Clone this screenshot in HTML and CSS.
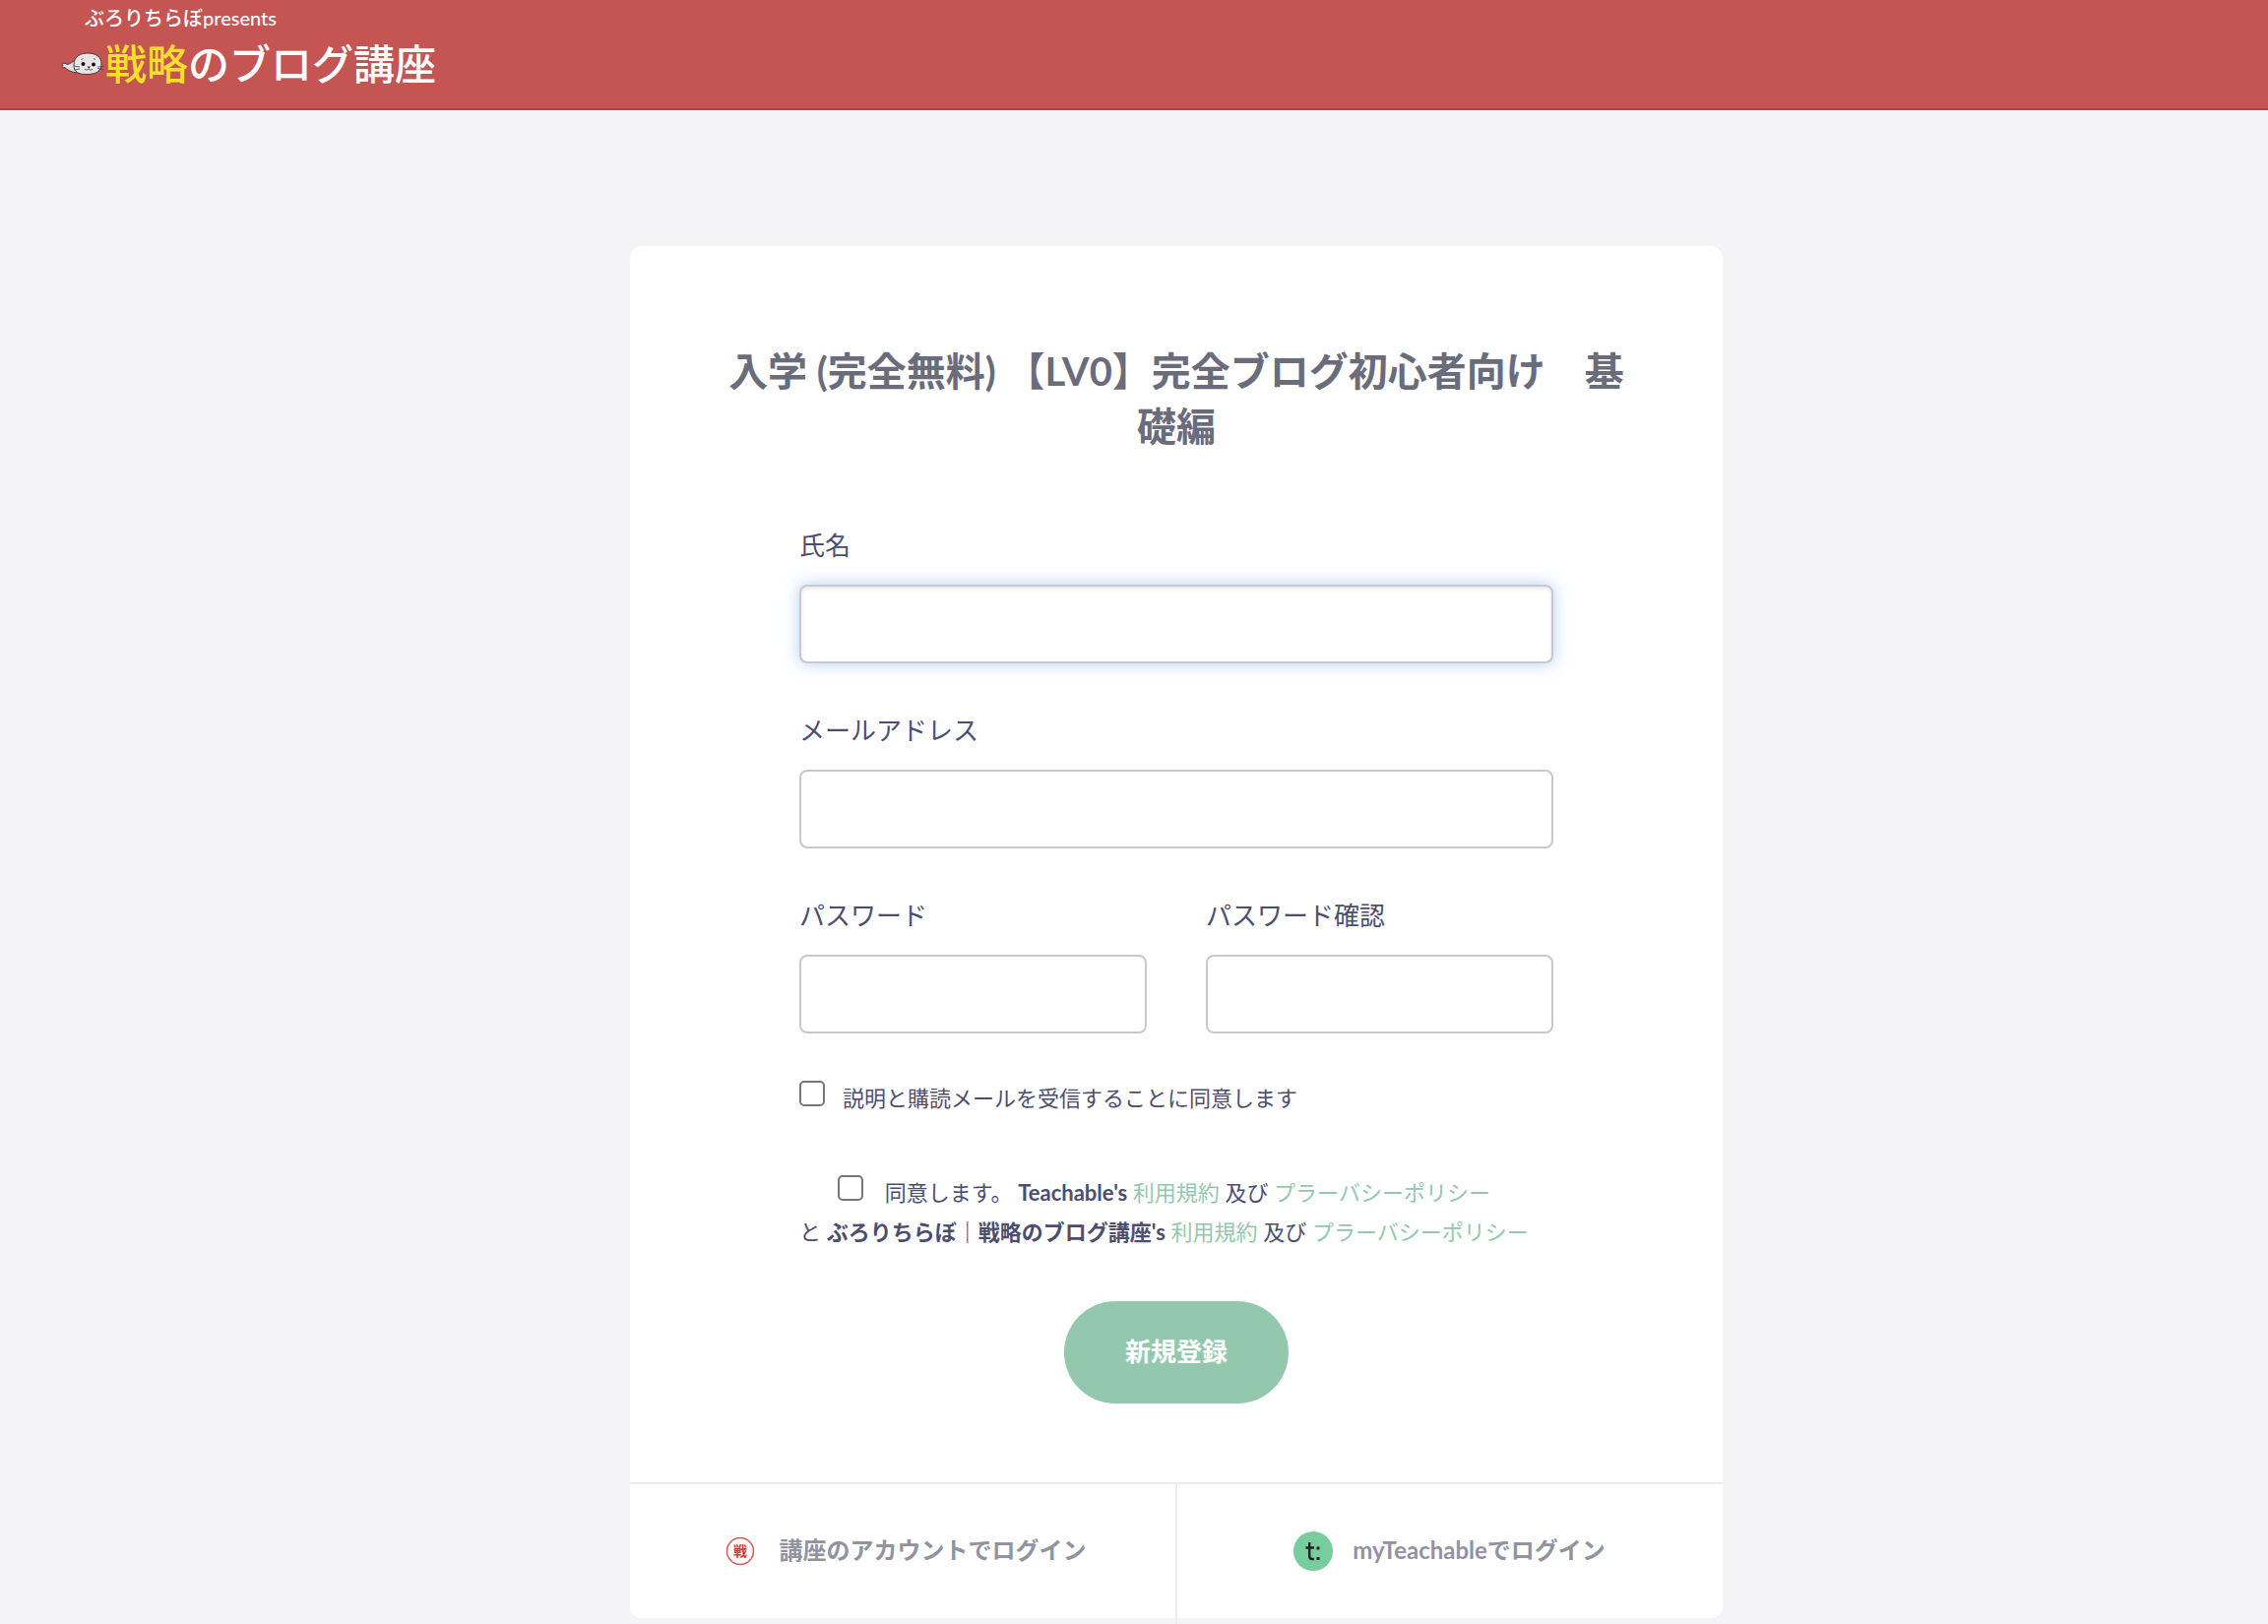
FILE: index.html
```html
<!DOCTYPE html>
<html lang="ja">
<head>
<meta charset="utf-8">
<meta name="viewport" content="width=device-width, initial-scale=1">
<title>戦略のブログ講座</title>
<link rel="stylesheet" href="styles.css">
</head>
<body>
<header class="site-header">
  <a class="logo" href="#">
    <span class="logo-sub">ぶろりちらぼpresents</span>
    <span class="logo-main">
      <svg class="seal" viewBox="0 0 44 24" aria-hidden="true">
        <path d="M16 21C10 20 6 18 4 15.500C1 16 0 14.500 2 13.500L1 12C3 10.500 5 11.500 6 12.500C9 12 12 10 15 7Z" fill="#e4e0e2" stroke="#4a3a3c" stroke-width="1"/>
        <path d="M13 13C13 4 20 1 27 1C36 1 41 5 41 12C41 19 36 22.500 26 22.500C17 22.500 13 20 13 13Z" fill="#e9e4e6" stroke="#4a3a3c" stroke-width="1"/>
        <circle cx="22.500" cy="12" r="2" fill="#111"/>
        <circle cx="33" cy="12.500" r="2" fill="#111"/>
        <path d="M26.500 14.500h3.500l-1.700 2z" fill="#222"/>
        <path d="M20.500 7.500l2-1M33 6.500l2 1M28 16.500c-.5 2-3 2-4 .5M28 16.500c.5 2 3 2 4 .5M13 14l6 1M13 18l6-1M37 15l6-.5M37 16.500l6 1" fill="none" stroke="#444" stroke-width=".8"/>
      </svg>
      <span class="logo-text"><span class="logo-accent">戦略</span>のブログ講座</span>
    </span>
  </a>
</header>

<main class="page">
  <section class="card">
    <form class="signup">
      <h1 class="title">入学 (完全無料) 【LV0】完全ブログ初心者向け　基礎編</h1>
      <div class="fields">
        <div class="field">
          <label for="name">氏名</label>
          <input class="input is-active" id="name" type="text">
        </div>
        <div class="field">
          <label for="email">メールアドレス</label>
          <input class="input" id="email" type="email">
        </div>
        <div class="field-row">
          <div class="field">
            <label for="password">パスワード</label>
            <input class="input" id="password" type="password">
          </div>
          <div class="field">
            <label for="confirm">パスワード確認</label>
            <input class="input" id="confirm" type="password">
          </div>
        </div>
        <div class="mail-consent">
          <input class="check" id="mail" type="checkbox">
          <label for="mail">説明と購読メールを受信することに同意します</label>
        </div>
        <div class="terms">
          <input class="check" id="terms" type="checkbox"><label for="terms">同意します。</label> <strong>Teachable's</strong> <a href="#">利用規約</a> 及び <a href="#">プラーバシーポリシー</a><br>
          と <strong>ぶろりちらぼ｜戦略のブログ講座's</strong> <a href="#">利用規約</a> 及び <a href="#">プラーバシーポリシー</a>
        </div>
        <button class="submit" type="submit">新規登録</button>
      </div>
    </form>
    <nav class="logins">
      <a class="login" href="#">
        <svg class="login-icon" viewBox="0 0 40 40" aria-hidden="true">
          <circle cx="20" cy="20" r="13.500" fill="#fff" stroke="#d9595b" stroke-width="1.500"/>
          <text class="stamp" x="20" y="25" text-anchor="middle">戦</text>
        </svg>
        <span class="login-text">講座のアカウントでログイン</span>
      </a>
      <a class="login" href="#">
        <svg class="login-icon" viewBox="0 0 40 40" aria-hidden="true">
          <circle cx="20" cy="20" r="20" fill="#78cd9e"/>
          <path d="M16.200 11v14q0 3 3 3h1.800M12.500 16.500h8.500" fill="none" stroke="#222" stroke-width="2.400"/>
          <path d="M23.500 15.500h3v3h-3zM23.500 26h3v3h-3z" fill="#222"/>
        </svg>
        <span class="login-text">myTeachableでログイン</span>
      </a>
    </nav>
  </section>
</main>
</body>
</html>
```

FILE: styles.css
```css
*,
*::before {
  box-sizing: border-box;
}

body {
  margin: 0;
  background: #f4f4f7;
  color: #4d4e6f;
  font-family: Lato, "Noto Sans CJK JP", sans-serif;
  font-size: 22px;
}

a {
  color: #94c8ae;
  text-decoration: none;
}

.site-header {
  padding: 2px 62px 14px;
  border-bottom: 2px solid #bd3d3d;
  background: #c45553;
}

.logo {
  display: inline-flex;
  flex-direction: column;
  color: #fff;
}

.logo-sub {
  padding-left: 24px;
  font-size: 20px;
  font-weight: 500;
  line-height: 32px;
}

.logo-main {
  display: flex;
  align-items: center;
  gap: 1px;
  font-size: 42px;
  font-weight: 500;
  line-height: 62px;
}

.logo-accent {
  color: #f7de2e;
}

.seal {
  width: 44px;
  height: 24px;
}

.page {
  padding: 138px 0 6px 86px;
}

.card {
  width: 100%;
  max-width: 1110px;
  margin: 0 auto;
  border-radius: 12px;
  background: #fff;
}

.signup {
  padding: 99px 80px 80px;
}

.title {
  margin: 0 0 75px;
  padding: 0 12px;
  color: #6b6c7b;
  font-size: 40px;
  font-weight: 700;
  line-height: 56px;
  text-align: center;
}

.fields {
  display: flex;
  flex-direction: column;
  gap: 50px;
  padding: 0 92px;
}

.field {
  display: flex;
  flex: 1;
  flex-direction: column;
  gap: 22px;
  min-width: 0;
}

.field label {
  font-size: 26px;
  line-height: 36px;
}

.field-row {
  display: flex;
  gap: 60px;
}

.input {
  width: 100%;
  height: 80px;
  padding: 0 24px;
  border: 2px solid #c9c8ce;
  border-radius: 8px;
  outline: 0;
  background: #fff;
  color: inherit;
  font: inherit;
}

.input:focus,
.input.is-active {
  box-shadow: inset 0 2px 4px rgba(0, 0, 0, 0.1), 0 0 16px rgba(102, 163, 233, 0.5);
}

.check {
  flex: none;
  width: 26px;
  height: 26px;
  margin: 0;
  border: 2px solid #767676;
  border-radius: 5px;
  appearance: none;
  background: #fff;
}

.check:checked {
  background: #94c8ae;
}

.mail-consent {
  display: flex;
  gap: 18px;
  margin-top: -2px;
  line-height: 36px;
}

.terms {
  align-self: flex-start;
  margin-top: 8px;
  line-height: 40px;
  text-align: center;
}

.terms .check {
  margin-right: 22px;
  vertical-align: 0;
}

.submit {
  align-self: center;
  height: 104px;
  padding: 0 62px 6px;
  border: 0;
  border-radius: 52px;
  background: #94c8ae;
  color: #fff;
  font: inherit;
  font-size: 26px;
  font-weight: 700;
}

.logins {
  display: grid;
  grid-template-columns: 1fr 1fr;
  border-top: 2px solid #edecf3;
}

.login {
  position: relative;
  display: flex;
  align-items: center;
  justify-content: center;
  gap: 20px;
  min-height: 136px;
  color: #9293a0;
  font-size: 24px;
  font-weight: 700;
}

/* The divider runs on a little below the card. */
.login + .login::before {
  position: absolute;
  top: 0;
  bottom: -6px;
  left: -1px;
  width: 2px;
  background: #edecf3;
  content: "";
}

.login-icon {
  width: 40px;
  height: 40px;
}

.login-text {
  padding-bottom: 6px;
}

.stamp {
  fill: #cf3b3b;
  font-size: 14px;
  font-weight: 700;
}
```
